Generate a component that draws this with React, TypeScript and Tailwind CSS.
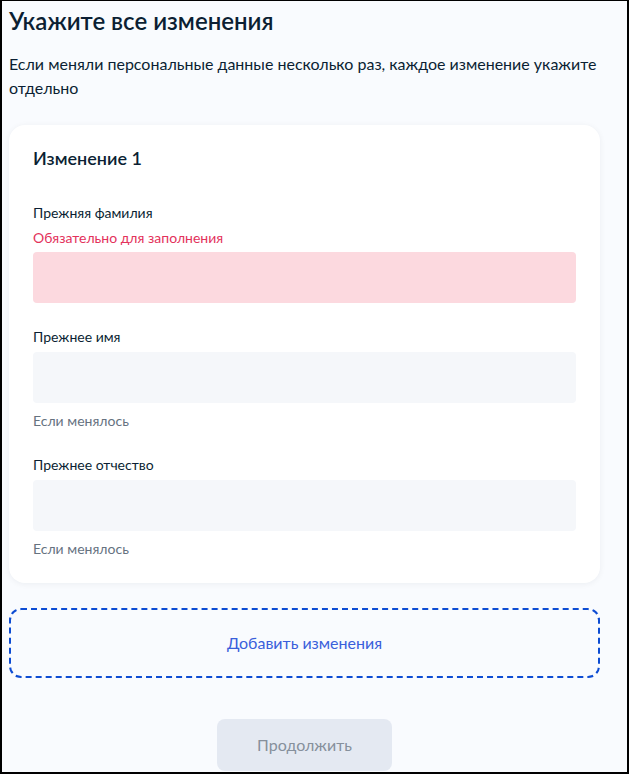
import React from 'react';

const Field: React.FC<{ label: string; error?: string; hint?: string }> = ({ label, error, hint }) => (
  <div className="flex flex-col">
    <label className="text-[14px] leading-[20px] text-[#0b1f33]">{label}</label>
    {error && <span className="mt-[5px] text-[14px] leading-[20px] text-[#e3325b]">{error}</span>}
    <div
      className={`${error ? 'mt-[4px] bg-[#fcd9df]' : 'mt-[5px] bg-[#f5f7fa]'} h-[51px] rounded-[4px]`}
    />
    {hint && <span className="mt-[8px] text-[14px] leading-[20px] text-[#66727f]">{hint}</span>}
  </div>
);

export default function App() {
  return (
    <div
      className="w-[629px] h-[774px] overflow-hidden bg-[#f9fbfe] border-l-2 border-t border-r-2 border-b-2 border-black"
      style={{ fontFamily: 'Lato, "Noto Sans", sans-serif' }}
    >
      <div className="pl-[7px] pr-[27px] pt-[4px]">
        {/* Header */}
        <h1 className="text-[24px] leading-[32px] font-semibold text-[#0b1f33]">Укажите все изменения</h1>
        <p className="mt-[15px] text-[16px] leading-[24px] text-[#0b1f33]">
          Если меняли персональные данные несколько раз, каждое изменение укажите отдельно
        </p>

        {/* Change card */}
        <div className="mt-[25px] rounded-[16px] bg-white px-[24px] pt-[21px] pb-[24px] shadow-[0_1px_6px_rgba(11,31,51,0.06)]">
          <h2 className="text-[18px] leading-[24px] font-semibold text-[#0b1f33]">Изменение 1</h2>
          <div className="mt-[33px] flex flex-col gap-[24px]">
            <Field label="Прежняя фамилия" error="Обязательно для заполнения" />
            <Field label="Прежнее имя" hint="Если менялось" />
            <Field label="Прежнее отчество" hint="Если менялось" />
          </div>
        </div>

        {/* Add change */}
        <button className="mt-[25px] flex h-[70px] w-full items-center justify-center rounded-[12px] border-2 border-dashed border-[#0d4cd3] text-[16px] leading-[24px] text-[#3a5fdb]">
          Добавить изменения
        </button>

        {/* Continue */}
        <div className="mt-[41px] flex justify-center">
          <button className="h-[52px] w-[175px] rounded-[8px] bg-[#e4e9f2] text-[16px] leading-[24px] text-[#86909c]">
            Продолжить
          </button>
        </div>
      </div>
    </div>
  );
}
